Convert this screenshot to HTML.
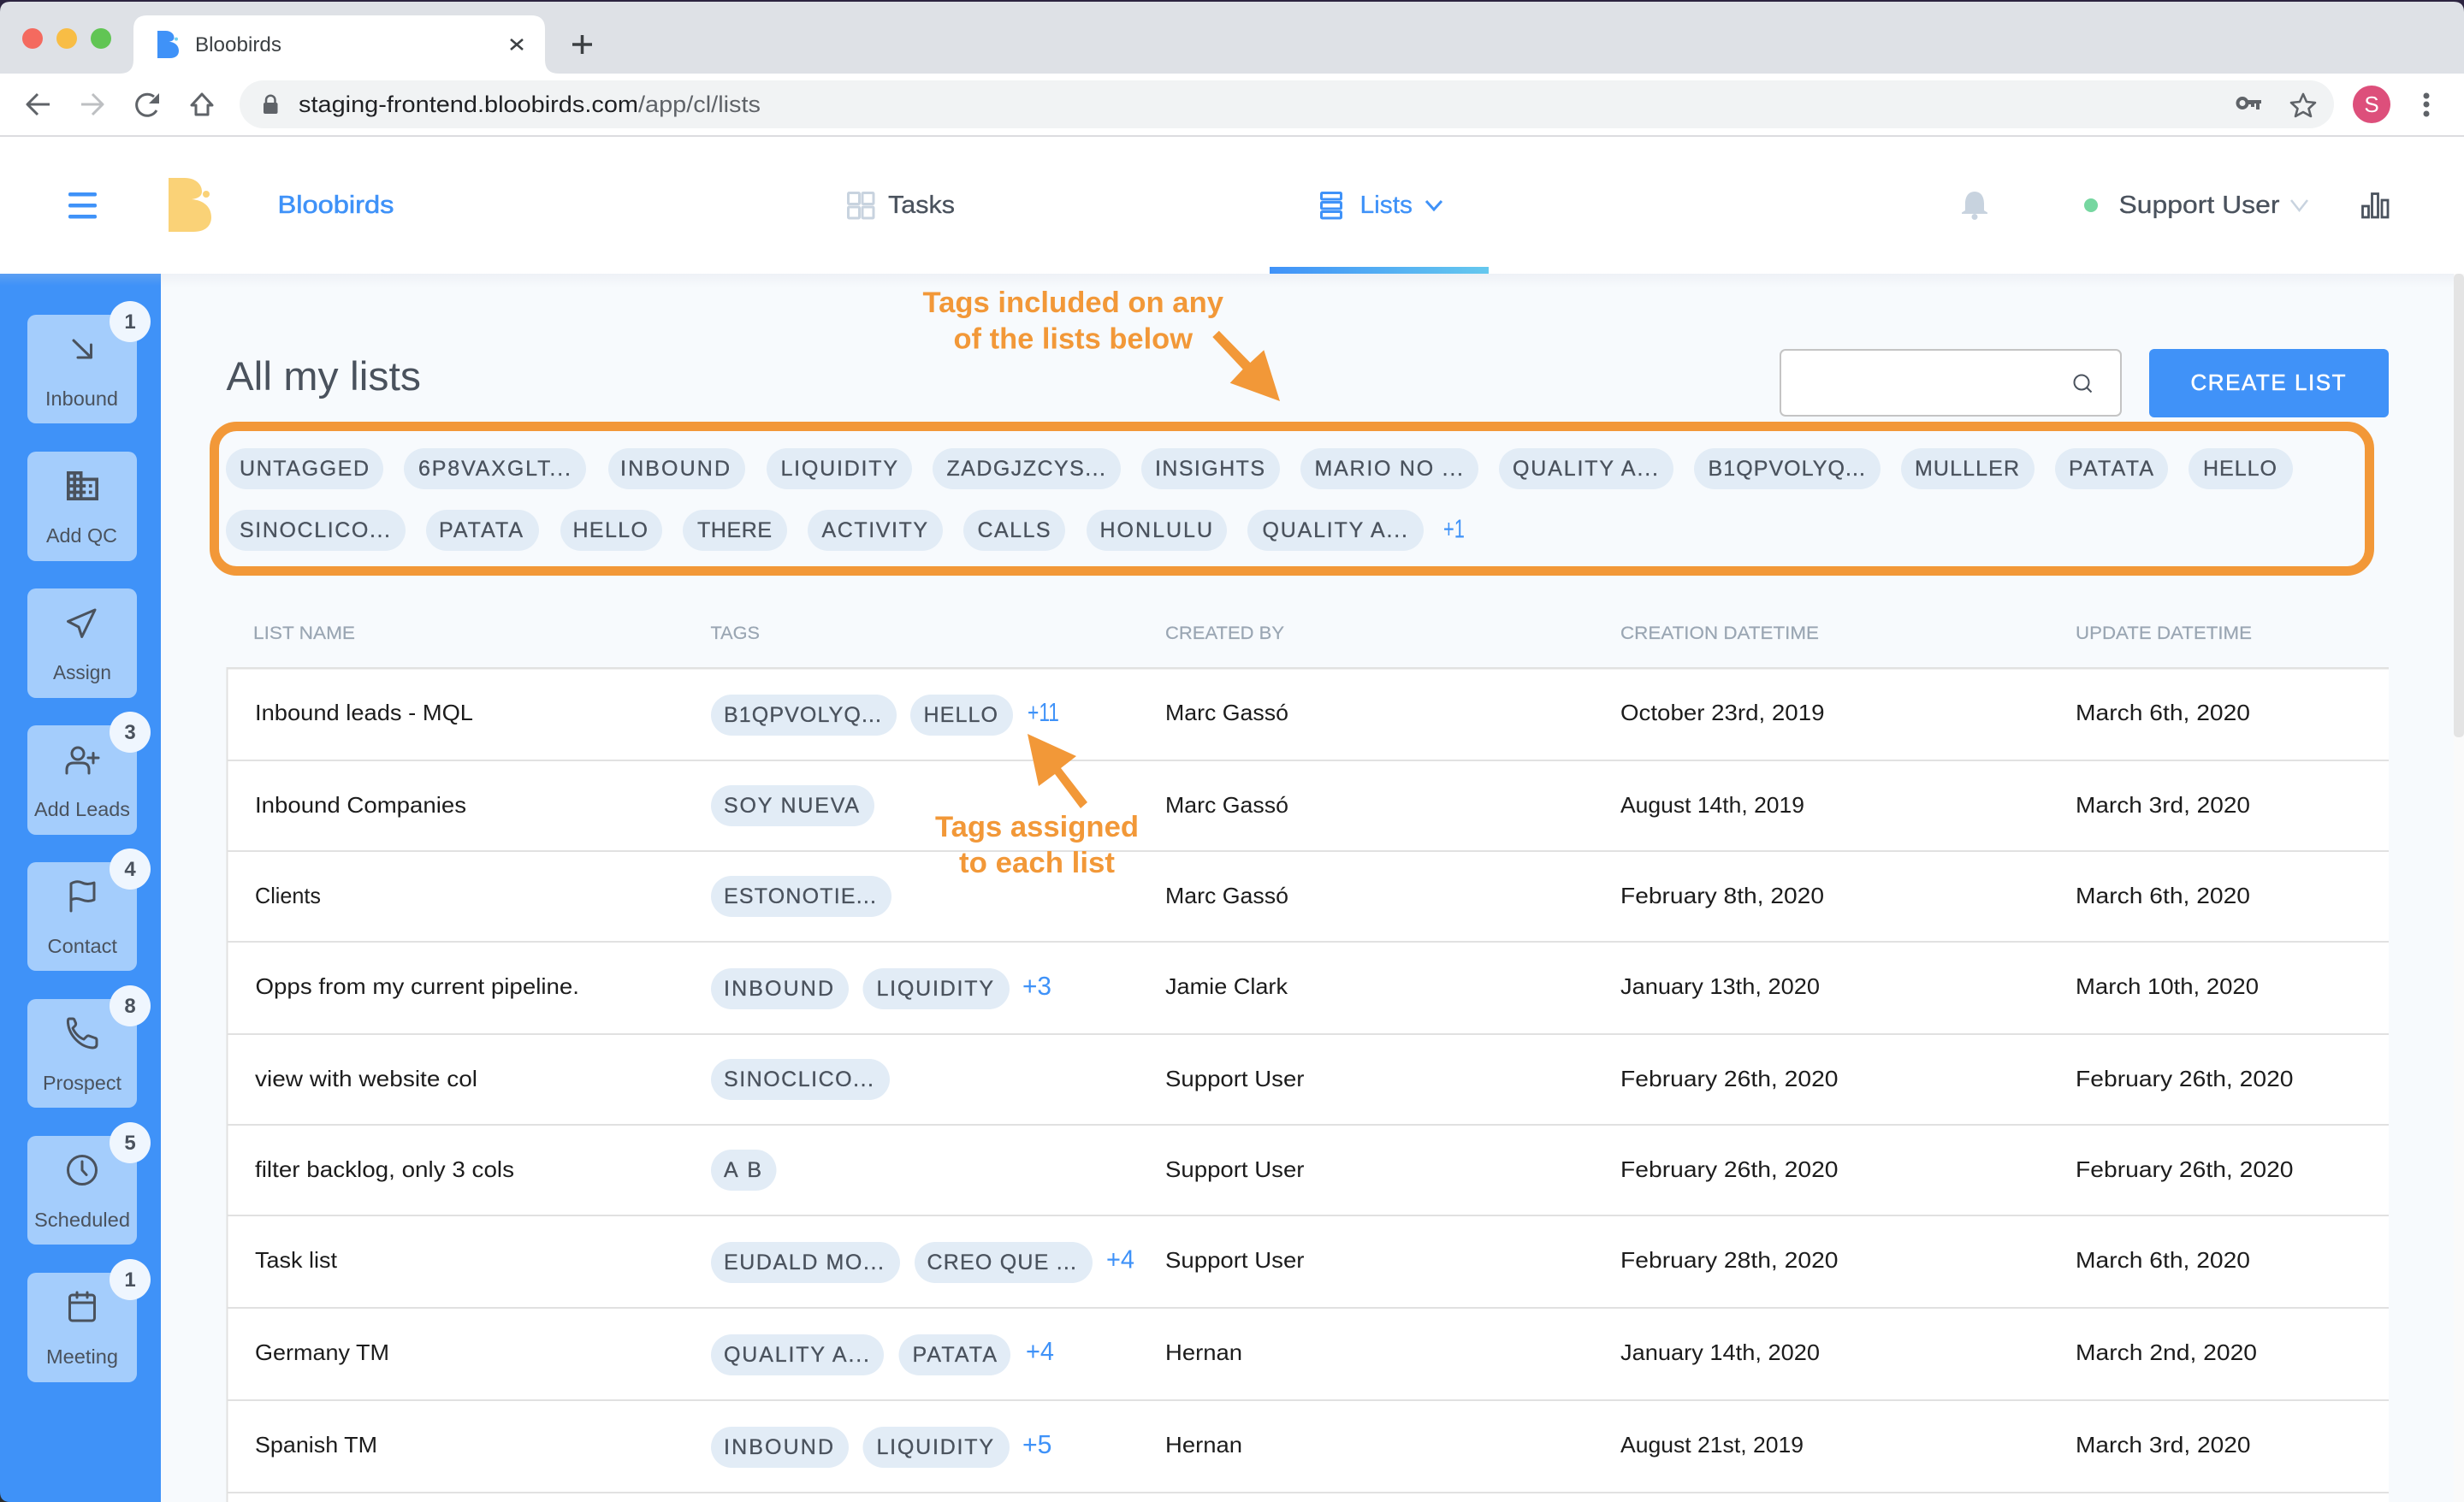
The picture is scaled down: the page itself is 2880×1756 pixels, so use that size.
<!DOCTYPE html>
<html lang="en"><head><meta charset="utf-8"><title>Bloobirds</title>
<style>
html,body{margin:0;padding:0;background:#f7fafd}
svg{display:block}
text{font-family:"Liberation Sans",sans-serif;white-space:pre}
.t{font-size:25px;fill:#4a525d;stroke:#4a525d;stroke-width:.3px}
.p{fill:#e2ecf6}
.c{font-size:26px;fill:#1c1c1c}
.h{font-size:21px;fill:#9aa6b3;stroke:#9aa6b3;stroke-width:.2px}
.s{font-size:23px;fill:#4a525d;text-anchor:start}
.n{font-size:24px;font-weight:bold;fill:#4a525d;text-anchor:middle}
.b{fill:#a4cdfc}
.d{fill:#eff6fe}
.m{font-size:31px;fill:#3f92f8}
.a{font-size:34px;font-weight:bold;fill:#f29838}
.i{fill:none;stroke:#4a525d;stroke-width:3;stroke-linecap:round;stroke-linejoin:round}
.g{fill:none;stroke:#5f6368;stroke-width:3;stroke-linejoin:round}
.l{fill:#e1e1e1}
</style></head><body>
<svg xmlns="http://www.w3.org/2000/svg" width="2880" height="1756" viewBox="0 0 2880 1756">
<defs><linearGradient id="u" x1="0" x2="1" y1="0" y2="0"><stop offset="0" stop-color="#4092f8"/><stop offset="1" stop-color="#65c8ee"/></linearGradient>
<linearGradient id="sh" x1="0" x2="0" y1="0" y2="1"><stop offset="0" stop-color="#eef1f6"/><stop offset="1" stop-color="#f7fafd"/></linearGradient>
<linearGradient id="sb" x1="0" x2="0" y1="0" y2="1"><stop offset="0" stop-color="#5c9ff2"/><stop offset="1" stop-color="#3f92f8"/></linearGradient></defs>

<!-- browser chrome -->
<rect width="2880" height="86" fill="#dee1e6"/>
<rect width="2880" height="2" fill="#2c2440"/>
<path d="M0 2H12Q0 2 0 14ZM2880 2H2868Q2880 2 2880 14Z" fill="#2c2440"/>
<circle cx="38" cy="45" r="12" fill="#f46a5f"/><circle cx="78" cy="45" r="12" fill="#f8bd45"/><circle cx="118" cy="45" r="12" fill="#61c554"/>
<path d="M140 86Q156 86 156 70V34Q156 18 172 18H621Q637 18 637 34V70Q637 86 653 86Z" fill="#fff"/>
<g transform="translate(184,36) scale(.5,.508) translate(-197,-208)"><path d="M197 208H216C228 208 236 215 236 224C236 229 232 232 224 233C238 234 247 242 247 254C247 264 240 271 226 271H197Z" fill="#3f92f8"/><circle cx="241" cy="227" r="4" fill="#6fd0ee"/></g>
<text x="228" y="60" font-size="24" fill="#3c4043" textLength="101" lengthAdjust="spacingAndGlyphs">Bloobirds</text>
<path d="M597 46L611 58M611 46L597 58" stroke="#3c4043" stroke-width="2.500" fill="none"/>
<path d="M669 52H692M680.500 41V63" stroke="#3c4043" stroke-width="3.500" fill="none"/>
<rect y="86" width="2880" height="72" fill="#fff"/><rect y="158" width="2880" height="2" fill="#dcdce0"/>
<path class="g" d="M58 122H33M44 110L32 122L44 134"/>
<path class="g" style="stroke:#bdbfc2" d="M95 122H119M108 110L120 122L108 134"/>
<path class="g" d="M183 129A12.500 12.500 0 1 1 180 113"/><path d="M186 109V121H174Z" fill="#5f6368"/>
<path class="g" d="M236 110L224 123H229V134H243V123H248Z"/>
<rect x="280" y="94" width="2448" height="56" rx="28" fill="#f1f3f4"/>
<rect x="308" y="120" width="16.500" height="13" rx="2" fill="#5f6368"/><path d="M311 120V117A5 5 0 0 1 321.500 117V120" fill="none" stroke="#5f6368" stroke-width="2.500"/>
<text x="349" y="131" font-size="27" fill="#202124" textLength="397" lengthAdjust="spacingAndGlyphs">staging-frontend.bloobirds.com</text>
<text x="746" y="131" font-size="27" fill="#5f6368" textLength="143" lengthAdjust="spacingAndGlyphs">/app/cl/lists</text>
<circle cx="2621" cy="120.500" r="5.500" fill="none" stroke="#5f6368" stroke-width="4"/><path d="M2627 117H2643V121H2641V128H2637V121H2635V125H2631V122H2627Z" fill="#5f6368"/>
<path class="g" style="stroke-width:2.600" d="M2692 110L2696 119L2706 120L2698.500 127L2701 136L2692 131L2683 136L2685.500 127L2678 120L2688 119Z"/>
<circle cx="2772" cy="122" r="22" fill="#dd4f7b"/><text x="2772" y="131" font-size="26" fill="#fff" text-anchor="middle">S</text>
<circle cx="2836" cy="112" r="3.500" fill="#5f6368"/><circle cx="2836" cy="122" r="3.500" fill="#5f6368"/><circle cx="2836" cy="133" r="3.500" fill="#5f6368"/>

<!-- app nav -->
<rect y="160" width="2880" height="160" fill="#fff"/>
<rect x="80" y="225" width="33" height="4.500" rx="2" fill="#3f92f8"/><rect x="80" y="238" width="33" height="4.500" rx="2" fill="#3f92f8"/><rect x="80" y="251" width="33" height="4.500" rx="2" fill="#3f92f8"/>
<path d="M197 208H216C228 208 236 215 236 224C236 229 232 232 224 233C238 234 247 242 247 254C247 264 240 271 226 271H197Z" fill="#fad277"/><circle cx="241" cy="227" r="4" fill="#fad277"/>
<text x="324.500" y="249" font-size="29" fill="#3f92f8" stroke="#3f92f8" stroke-width=".6" textLength="136" lengthAdjust="spacingAndGlyphs">Bloobirds</text>
<g fill="none" stroke="#c8d3df" stroke-width="3"><rect x="991.500" y="225.500" width="13" height="13" rx="1"/><rect x="1008" y="225.500" width="13" height="13" rx="1"/><rect x="991.500" y="242" width="13" height="13" rx="1"/><rect x="1008" y="242" width="13" height="13" rx="1"/></g>
<text x="1038" y="249" font-size="29" fill="#4a525d" stroke="#4a525d" stroke-width=".3" textLength="78" lengthAdjust="spacingAndGlyphs">Tasks</text>
<g fill="none" stroke="#3f92f8" stroke-width="3"><rect x="1544.500" y="225.500" width="23" height="7.500" rx="1"/><rect x="1544.500" y="236.500" width="23" height="7.500" rx="1"/><rect x="1544.500" y="247.500" width="23" height="7.500" rx="1"/></g>
<text x="1589.500" y="249" font-size="29" fill="#3f92f8" stroke="#3f92f8" stroke-width=".3" textLength="61.500" lengthAdjust="spacingAndGlyphs">Lists</text>
<path d="M1667 235L1676 245L1685 235" fill="none" stroke="#3f92f8" stroke-width="3"/>
<path d="M2308 224C2300 224 2297 231 2297 238V246L2293 248.500V250H2323V248.500L2319 246V238C2319 231 2316 224 2308 224Z" fill="#c8d3df"/><circle cx="2308" cy="253.500" r="3.500" fill="#c8d3df"/>
<circle cx="2444" cy="240" r="8" fill="#76d7a0"/>
<text x="2476.500" y="249" font-size="29" fill="#4a525d" stroke="#4a525d" stroke-width=".3" textLength="188" lengthAdjust="spacingAndGlyphs">Support User</text>
<path d="M2678 234L2687.500 246L2697 234" fill="none" stroke="#c8d3df" stroke-width="2.500"/>
<g fill="none" stroke="#4a525d" stroke-width="2.800"><rect x="2761.500" y="241" width="7" height="13"/><rect x="2772.500" y="226.500" width="7" height="27.500"/><rect x="2784" y="234" width="7" height="20"/></g>

<!-- body -->
<rect y="320" width="2880" height="1436" fill="#f7fafd"/>
<rect y="320" width="2880" height="16" fill="url(#sh)"/>
<rect x="1484" y="312" width="256" height="8" fill="url(#u)"/>
<rect x="2868" y="320" width="12" height="1436" fill="#fafafa"/>
<rect x="2868" y="320" width="12" height="542" rx="5" fill="#e4e4e4"/>

<!-- sidebar -->
<rect y="320" width="188" height="1436" fill="#3f92f8"/>
<rect y="320" width="188" height="14" fill="url(#sb)"/>
<path d="M0 1756V1744Q0 1756 12 1756Z" fill="#2c2c2c"/>
<rect class="b" x="32" y="368" width="128" height="127" rx="10"/><rect class="b" x="32" y="528" width="128" height="128" rx="10"/><rect class="b" x="32" y="688" width="128" height="128" rx="10"/><rect class="b" x="32" y="848" width="128" height="128" rx="10"/><rect class="b" x="32" y="1008" width="128" height="127" rx="10"/><rect class="b" x="32" y="1168" width="128" height="127" rx="10"/><rect class="b" x="32" y="1328" width="128" height="127" rx="10"/><rect class="b" x="32" y="1488" width="128" height="128" rx="10"/>
<path class="i" d="M86 398L106.500 418M106.500 403V418H91"/>
<path transform="translate(74.300,545.300) scale(1.850,1.890)" fill="#4a525d" fill-rule="evenodd" d="M12 7V3H2v18h20V7H12zM6 19H4v-2h2v2zm0-4H4v-2h2v2zm0-4H4V9h2v2zm0-4H4V5h2v2zm4 12H8v-2h2v2zm0-4H8v-2h2v2zm0-4H8V9h2v2zm0-4H8V5h2v2zm10 12h-8v-2h2v-2h-2v-2h2v-2h-2V9h8v10zm-2-8h-2v2h2v-2zm0 4h-2v2h2v-2z"/>
<path class="i" d="M111 713L79.500 726.500L92 733L95.700 744.500Z"/>
<circle class="i" cx="91" cy="881" r="7"/><path class="i" d="M78 904V900Q78 892 86 892H96Q104 892 104 900V904M109 880.500V892M103 886H115"/>
<path class="i" d="M83 1065V1033Q90 1029 96 1032T110 1032V1052Q103 1055 96 1052T83 1052"/>
<path class="i" d="M85 1191H81Q79 1191 79.500 1196C81 1211 94 1224 108 1225Q113 1225 113 1221V1216Q113 1214 111 1213.500L104 1211Q102.500 1210.500 101 1212L98 1215C92 1213 87 1207 85 1202L88 1199Q89 1197.500 88.500 1196L87 1192.500Q86.500 1191 85 1191Z"/>
<circle class="i" cx="96" cy="1368" r="16.500"/><path class="i" d="M96 1358V1368L101 1373.500"/>
<rect class="i" x="81.500" y="1514" width="29" height="30" rx="3"/><path class="i" d="M81.500 1523H110.500M90 1511V1517M102 1511V1517"/>
<text class="s" x="53" y="474" textLength="85" lengthAdjust="spacingAndGlyphs">Inbound</text>
<text class="s" x="54" y="634" textLength="83" lengthAdjust="spacingAndGlyphs">Add QC</text>
<text class="s" x="62" y="794" textLength="68" lengthAdjust="spacingAndGlyphs">Assign</text>
<text class="s" x="40" y="954" textLength="112" lengthAdjust="spacingAndGlyphs">Add Leads</text>
<text class="s" x="55.500" y="1114" textLength="81.500" lengthAdjust="spacingAndGlyphs">Contact</text>
<text class="s" x="50" y="1274" textLength="92" lengthAdjust="spacingAndGlyphs">Prospect</text>
<text class="s" x="40" y="1434" textLength="112" lengthAdjust="spacingAndGlyphs">Scheduled</text>
<text class="s" x="54" y="1594" textLength="84" lengthAdjust="spacingAndGlyphs">Meeting</text>
<circle class="d" cx="152" cy="376" r="24"/><circle class="d" cx="152" cy="856" r="24"/><circle class="d" cx="152" cy="1016" r="24"/><circle class="d" cx="152" cy="1176" r="24"/><circle class="d" cx="152" cy="1336" r="24"/><circle class="d" cx="152" cy="1496" r="24"/>
<text class="n" x="152" y="384">1</text><text class="n" x="152" y="864">3</text><text class="n" x="152" y="1024">4</text><text class="n" x="152" y="1184">8</text><text class="n" x="152" y="1344">5</text><text class="n" x="152" y="1504">1</text>

<!-- heading -->
<text x="264.500" y="456" font-size="47" fill="#4a525d" textLength="227.500" lengthAdjust="spacingAndGlyphs">All my lists</text>
<rect x="2081" y="409" width="398" height="77" rx="6" fill="#fff" stroke="#c4c4c4" stroke-width="2"/>
<circle cx="2433" cy="447" r="8.500" fill="none" stroke="#4a525d" stroke-width="2"/><path d="M2439 453L2444.500 458.500" stroke="#4a525d" stroke-width="2"/>
<rect x="2512" y="408" width="280" height="80" rx="6" fill="#4092f8"/>
<text x="2560.500" y="456" font-size="26" fill="#fff" stroke="#fff" stroke-width=".5" textLength="181">CREATE LIST</text>

<!-- orange annotations -->
<rect x="250.500" y="498.500" width="2519" height="169" rx="26" fill="none" stroke="#f29838" stroke-width="11"/>
<text class="a" x="1078.500" y="365" textLength="351.500" lengthAdjust="spacingAndGlyphs">Tags included on any</text>
<text class="a" x="1114.500" y="407.500" textLength="279.500" lengthAdjust="spacingAndGlyphs">of the lists below</text>
<polygon fill="#f29838" points="1424.800,386.700 1417.300,394 1452.700,431.700 1437.700,447.700 1496,469 1477.300,409.300 1461.300,424"/>

<!-- global tags -->
<g class="p"><rect x="264" y="524" width="184" height="48" rx="24"/><rect x="472" y="524" width="213" height="48" rx="24"/><rect x="711" y="524" width="160" height="48" rx="24"/><rect x="896" y="524" width="170" height="48" rx="24"/><rect x="1090" y="524" width="220" height="48" rx="24"/><rect x="1334" y="524" width="162" height="48" rx="24"/><rect x="1520" y="524" width="208" height="48" rx="24"/><rect x="1752" y="524" width="204" height="48" rx="24"/><rect x="1980" y="524" width="218" height="48" rx="24"/><rect x="2222" y="524" width="156" height="48" rx="24"/><rect x="2402" y="524" width="132" height="48" rx="24"/><rect x="2558" y="524" width="122" height="48" rx="24"/>
<rect x="264" y="596" width="210" height="48" rx="24"/><rect x="498" y="596" width="132" height="48" rx="24"/><rect x="655" y="596" width="119" height="48" rx="24"/><rect x="798" y="596" width="122" height="48" rx="24"/><rect x="944" y="596" width="158" height="48" rx="24"/><rect x="1126" y="596" width="119" height="48" rx="24"/><rect x="1270" y="596" width="164" height="48" rx="24"/><rect x="1458" y="596" width="206" height="48" rx="24"/></g>
<text class="t" x="280" y="556" textLength="151">UNTAGGED</text>
<text class="t" x="489" y="556" textLength="178">6P8VAXGLT...</text>
<text class="t" x="725" y="556" textLength="128">INBOUND</text>
<text class="t" x="912.500" y="556" textLength="136.500">LIQUIDITY</text>
<text class="t" x="1106.500" y="556" textLength="185.500">ZADGJZCYS...</text>
<text class="t" x="1350" y="556" textLength="128">INSIGHTS</text>
<text class="t" x="1536.500" y="556" textLength="173.500">MARIO NO ...</text>
<text class="t" x="1768" y="556" textLength="170">QUALITY A...</text>
<text class="t" x="1996.500" y="556" textLength="183.500">B1QPVOLYQ...</text>
<text class="t" x="2238" y="556" textLength="122">MULLLER</text>
<text class="t" x="2418" y="556" textLength="99">PATATA</text>
<text class="t" x="2575" y="556" textLength="86">HELLO</text>
<text class="t" x="280" y="628" textLength="176">SINOCLICO...</text>
<text class="t" x="513" y="628" textLength="98">PATATA</text>
<text class="t" x="669.500" y="628" textLength="87.500">HELLO</text>
<text class="t" x="815" y="628" textLength="87">THERE</text>
<text class="t" x="960.500" y="628" textLength="123.500">ACTIVITY</text>
<text class="t" x="1142.500" y="628" textLength="85">CALLS</text>
<text class="t" x="1285.500" y="628" textLength="131.500">HONLULU</text>
<text class="t" x="1475.500" y="628" textLength="169.500">QUALITY A...</text>
<text class="m" x="1687" y="628.500" textLength="25" lengthAdjust="spacingAndGlyphs">+1</text>

<!-- table header -->
<text class="h" x="296" y="747" textLength="119" lengthAdjust="spacingAndGlyphs">LIST NAME</text>
<text class="h" x="830.500" y="747" textLength="57.500" lengthAdjust="spacingAndGlyphs">TAGS</text>
<text class="h" x="1362" y="747" textLength="139" lengthAdjust="spacingAndGlyphs">CREATED BY</text>
<text class="h" x="1894" y="747" textLength="232" lengthAdjust="spacingAndGlyphs">CREATION DATETIME</text>
<text class="h" x="2426" y="747" textLength="206" lengthAdjust="spacingAndGlyphs">UPDATE DATETIME</text>

<!-- table body -->
<rect x="265" y="780" width="2527" height="976" fill="#fff"/>
<rect class="l" x="264.500" y="780" width="2" height="976"/>
<g class="l"><rect x="265" y="780" width="2527" height="2.500"/><rect x="265" y="888" width="2527" height="2"/><rect x="265" y="994" width="2527" height="2"/><rect x="265" y="1100" width="2527" height="2"/><rect x="265" y="1208" width="2527" height="2"/><rect x="265" y="1314" width="2527" height="2"/><rect x="265" y="1420" width="2527" height="2"/><rect x="265" y="1528" width="2527" height="2"/><rect x="265" y="1636" width="2527" height="2"/><rect x="265" y="1744" width="2527" height="2"/></g>

<!-- row pills -->
<g class="p"><rect x="831" y="812" width="217" height="48" rx="24"/><rect x="1064" y="812" width="120" height="48" rx="24"/>
<rect x="831" y="918" width="191" height="48" rx="24"/>
<rect x="831" y="1024" width="211" height="48" rx="24"/>
<rect x="831" y="1132" width="161" height="48" rx="24"/><rect x="1008.500" y="1132" width="171.500" height="48" rx="24"/>
<rect x="831" y="1238" width="209" height="48" rx="24"/>
<rect x="831" y="1344" width="76.500" height="48" rx="24"/>
<rect x="831" y="1452" width="221" height="48" rx="24"/><rect x="1069" y="1452" width="208" height="48" rx="24"/>
<rect x="831" y="1560" width="202" height="48" rx="24"/><rect x="1050.500" y="1560" width="130.500" height="48" rx="24"/>
<rect x="831" y="1668" width="161" height="48" rx="24"/><rect x="1008.500" y="1668" width="171.500" height="48" rx="24"/></g>
<text class="t" x="846" y="844" textLength="184">B1QPVOLYQ...</text>
<text class="t" x="1079.500" y="844" textLength="86.500">HELLO</text>
<text class="m" x="1201" y="843" textLength="37" lengthAdjust="spacingAndGlyphs">+11</text>
<text class="t" x="846" y="950" textLength="158">SOY NUEVA</text>
<text class="t" x="846" y="1056" textLength="178">ESTONOTIE...</text>
<text class="t" x="846" y="1164" textLength="128">INBOUND</text>
<text class="t" x="1024.500" y="1164" textLength="136.500">LIQUIDITY</text>
<text class="m" x="1195" y="1163" textLength="34" lengthAdjust="spacingAndGlyphs">+3</text>
<text class="t" x="846" y="1270" textLength="175">SINOCLICO...</text>
<text class="t" x="846" y="1376" textLength="44">A B</text>
<text class="t" x="846" y="1484" textLength="187">EUDALD MO...</text>
<text class="t" x="1083.500" y="1484" textLength="174.500">CREO QUE ...</text>
<text class="m" x="1293" y="1482.500" textLength="33" lengthAdjust="spacingAndGlyphs">+4</text>
<text class="t" x="846" y="1592" textLength="170">QUALITY A...</text>
<text class="t" x="1066.500" y="1592" textLength="98.500">PATATA</text>
<text class="m" x="1199" y="1590" textLength="33" lengthAdjust="spacingAndGlyphs">+4</text>
<text class="t" x="846" y="1700" textLength="128">INBOUND</text>
<text class="t" x="1024.500" y="1700" textLength="136.500">LIQUIDITY</text>
<text class="m" x="1195" y="1699" textLength="34.500" lengthAdjust="spacingAndGlyphs">+5</text>

<!-- names -->
<text class="c" x="298" y="842" textLength="255" lengthAdjust="spacingAndGlyphs">Inbound leads - MQL</text>
<text class="c" x="298" y="950" textLength="247" lengthAdjust="spacingAndGlyphs">Inbound Companies</text>
<text class="c" x="298" y="1056" textLength="77" lengthAdjust="spacingAndGlyphs">Clients</text>
<text class="c" x="298.500" y="1162" textLength="378.500" lengthAdjust="spacingAndGlyphs">Opps from my current pipeline.</text>
<text class="c" x="298" y="1270" textLength="260" lengthAdjust="spacingAndGlyphs">view with website col</text>
<text class="c" x="298" y="1376" textLength="303" lengthAdjust="spacingAndGlyphs">filter backlog, only 3 cols</text>
<text class="c" x="298" y="1482" textLength="96" lengthAdjust="spacingAndGlyphs">Task list</text>
<text class="c" x="298" y="1590" textLength="157" lengthAdjust="spacingAndGlyphs">Germany TM</text>
<text class="c" x="298" y="1698" textLength="143" lengthAdjust="spacingAndGlyphs">Spanish TM</text>

<!-- created by -->
<text class="c" x="1362" y="842" textLength="144" lengthAdjust="spacingAndGlyphs">Marc Gassó</text>
<text class="c" x="1362" y="950" textLength="144" lengthAdjust="spacingAndGlyphs">Marc Gassó</text>
<text class="c" x="1362" y="1056" textLength="144" lengthAdjust="spacingAndGlyphs">Marc Gassó</text>
<text class="c" x="1362" y="1162" textLength="143" lengthAdjust="spacingAndGlyphs">Jamie Clark</text>
<text class="c" x="1362" y="1270" textLength="162.500" lengthAdjust="spacingAndGlyphs">Support User</text>
<text class="c" x="1362" y="1376" textLength="162.500" lengthAdjust="spacingAndGlyphs">Support User</text>
<text class="c" x="1362" y="1482" textLength="162.500" lengthAdjust="spacingAndGlyphs">Support User</text>
<text class="c" x="1362" y="1590" textLength="90" lengthAdjust="spacingAndGlyphs">Hernan</text>
<text class="c" x="1362" y="1698" textLength="90" lengthAdjust="spacingAndGlyphs">Hernan</text>

<!-- creation -->
<text class="c" x="1894" y="842" textLength="238.500" lengthAdjust="spacingAndGlyphs">October 23rd, 2019</text>
<text class="c" x="1894" y="950" textLength="215" lengthAdjust="spacingAndGlyphs">August 14th, 2019</text>
<text class="c" x="1894" y="1056" textLength="238" lengthAdjust="spacingAndGlyphs">February 8th, 2020</text>
<text class="c" x="1894" y="1162" textLength="233" lengthAdjust="spacingAndGlyphs">January 13th, 2020</text>
<text class="c" x="1894" y="1270" textLength="254.500" lengthAdjust="spacingAndGlyphs">February 26th, 2020</text>
<text class="c" x="1894" y="1376" textLength="254.500" lengthAdjust="spacingAndGlyphs">February 26th, 2020</text>
<text class="c" x="1894" y="1482" textLength="254.500" lengthAdjust="spacingAndGlyphs">February 28th, 2020</text>
<text class="c" x="1894" y="1590" textLength="233" lengthAdjust="spacingAndGlyphs">January 14th, 2020</text>
<text class="c" x="1894" y="1698" textLength="214" lengthAdjust="spacingAndGlyphs">August 21st, 2019</text>

<!-- update -->
<text class="c" x="2426" y="842" textLength="204" lengthAdjust="spacingAndGlyphs">March 6th, 2020</text>
<text class="c" x="2426" y="950" textLength="204" lengthAdjust="spacingAndGlyphs">March 3rd, 2020</text>
<text class="c" x="2426" y="1056" textLength="204" lengthAdjust="spacingAndGlyphs">March 6th, 2020</text>
<text class="c" x="2426" y="1162" textLength="214" lengthAdjust="spacingAndGlyphs">March 10th, 2020</text>
<text class="c" x="2426" y="1270" textLength="254.500" lengthAdjust="spacingAndGlyphs">February 26th, 2020</text>
<text class="c" x="2426" y="1376" textLength="254.500" lengthAdjust="spacingAndGlyphs">February 26th, 2020</text>
<text class="c" x="2426" y="1482" textLength="204" lengthAdjust="spacingAndGlyphs">March 6th, 2020</text>
<text class="c" x="2426" y="1590" textLength="212" lengthAdjust="spacingAndGlyphs">March 2nd, 2020</text>
<text class="c" x="2426" y="1698" textLength="204.500" lengthAdjust="spacingAndGlyphs">March 3rd, 2020</text>

<!-- second annotation on top of table -->
<polygon fill="#f29838" points="1201,858 1258,884 1240,898 1271,938 1263,945 1233,905 1214,919"/>
<text class="a" x="1093" y="978" textLength="238" lengthAdjust="spacingAndGlyphs">Tags assigned</text>
<text class="a" x="1121" y="1020" textLength="182" lengthAdjust="spacingAndGlyphs">to each list</text>
</svg>
</body></html>
